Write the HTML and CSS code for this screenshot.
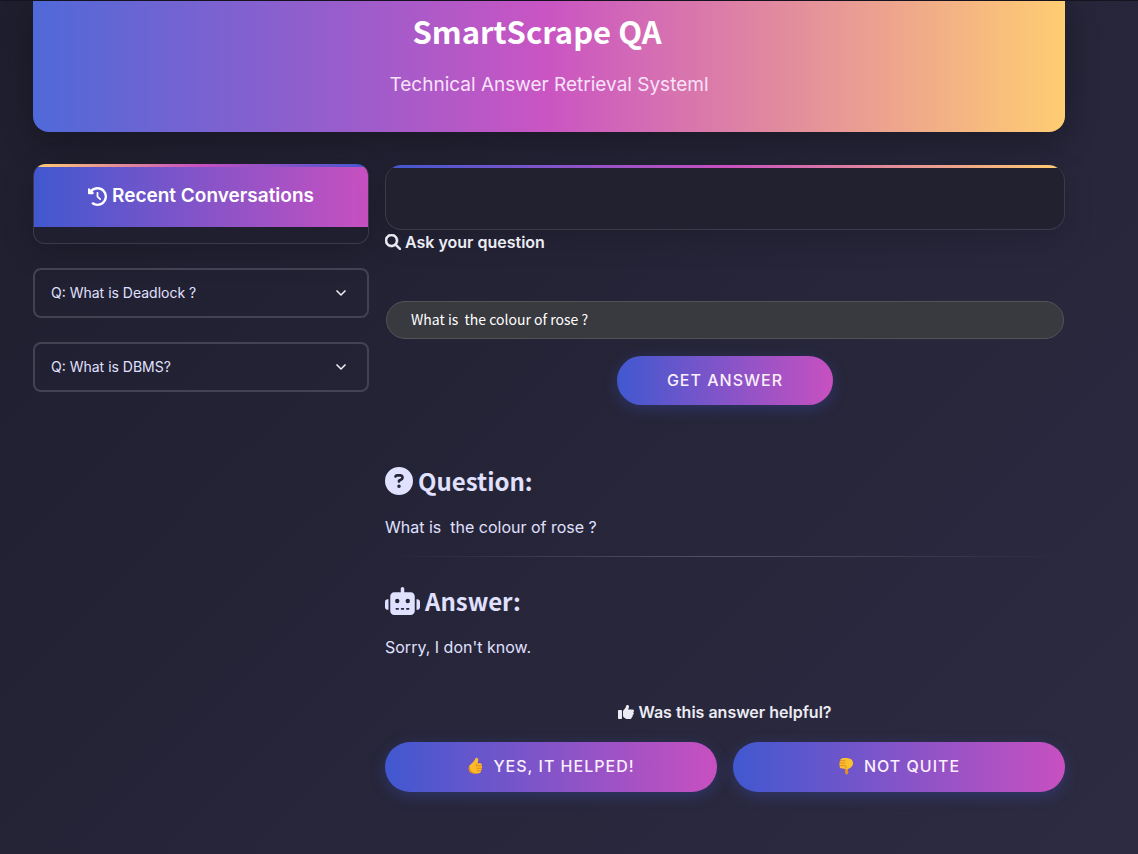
FILE: index.html
```html
<!DOCTYPE html>
<html lang="en">
<head>
<meta charset="utf-8">
<title>SmartScrape QA</title>
<link rel="stylesheet" href="styles.css">
</head>
<body>
<div class="page">
  <header class="banner">
    <h1 class="banner-title">SmartScrape QA</h1>
    <p class="banner-sub">Technical Answer Retrieval Systeml</p>
  </header>
  <div class="columns">
    <aside class="sidebar">
      <div class="recent">
        <h3 class="recent-title">
          <svg class="icon icon-md" viewBox="0 0 512 512" aria-hidden="true"><path d="M75 75L41 41C25.900 25.900 0 36.600 0 57.900V168c0 13.300 10.700 24 24 24H134.100c21.400 0 32.100-25.900 17-41l-30.800-30.800C155 85.500 203 64 256 64c106 0 192 86 192 192s-86 192-192 192c-40.800 0-78.600-12.700-109.700-34.400c-14.500-10.100-34.400-6.600-44.600 7.900s-6.600 34.400 7.900 44.600C151.200 495 201.700 512 256 512c141.400 0 256-114.600 256-256S397.400 0 256 0C185.300 0 121.300 28.700 75 75zm181 53c-13.300 0-24 10.700-24 24V256c0 6.400 2.500 12.500 7 17l72 72c9.400 9.400 24.600 9.400 33.900 0s9.400-24.600 0-33.900l-65-65V152c0-13.300-10.700-24-24-24z"/></svg>
          Recent Conversations
        </h3>
      </div>
      <button class="history" type="button" aria-expanded="false"><span>Q: What is Deadlock ?</span><svg class="chevron" viewBox="0 0 12 12" aria-hidden="true"><path d="M1.500 3.500l4.500 4.500 4.500-4.500"/></svg></button>
      <button class="history" type="button" aria-expanded="false"><span>Q: What is DBMS?</span><svg class="chevron" viewBox="0 0 12 12" aria-hidden="true"><path d="M1.500 3.500l4.500 4.500 4.500-4.500"/></svg></button>
    </aside>
    <main class="main">
      <div class="panel"></div>
      <label class="label" for="question">
        <svg class="icon icon-sm icon-search" viewBox="0 0 512 512" aria-hidden="true"><path d="M416 208c0 45.900-14.900 88.300-40 122.700L502.600 457.400c12.500 12.500 12.500 32.800 0 45.300s-32.800 12.500-45.300 0L330.700 376c-34.400 25.200-76.800 40-122.700 40C93.100 416 0 322.900 0 208S93.100 0 208 0S416 93.100 416 208zM208 352a144 144 0 1 0 0-288 144 144 0 1 0 0 288z"/></svg>
        Ask your question
      </label>
      <input class="field" id="question" type="text" value="What is  the colour of rose ?">
      <button class="pill pill-ask" type="button">GET ANSWER</button>
      <section class="block">
        <h2 class="heading">
          <svg class="icon icon-lg" viewBox="0 0 512 512" aria-hidden="true"><path d="M256 512A256 256 0 1 0 256 0a256 256 0 1 0 0 512zM169.800 165.300c7.900-22.300 29.100-37.300 52.800-37.300h58.300c34.900 0 63.100 28.300 63.100 63.100c0 22.600-12.100 43.500-31.700 54.800L280 264.400c-.2 13-10.900 23.600-24 23.600c-13.300 0-24-10.700-24-24V250.500c0-8.600 4.600-16.500 12.100-20.800l44.300-25.400c4.700-2.700 7.600-7.700 7.600-13.100c0-8.400-6.800-15.100-15.100-15.100H222.600c-3.400 0-6.400 2.100-7.500 5.300l-.4 1.200c-4.400 12.500-18.200 19-30.600 14.600s-19-18.200-14.600-30.600l.4-1.200zM224 352a32 32 0 1 1 64 0 32 32 0 1 1-64 0z"/></svg>
          Question:
        </h2>
        <p class="text">What is&nbsp; the colour of rose ?</p>
      </section>
      <hr class="rule">
      <section class="block-answer">
        <h2 class="heading">
          <svg class="icon icon-robot" viewBox="0 0 640 512" aria-hidden="true"><path fill-rule="evenodd" d="M320 0c17.700 0 32 14.300 32 32V96H472c39.800 0 72 32.200 72 72V440c0 39.800-32.200 72-72 72H168c-39.800 0-72-32.200-72-72V168c0-39.800 32.200-72 72-72H288V32c0-17.700 14.300-32 32-32zM208 384c-8.800 0-16 7.200-16 16s7.200 16 16 16h32c8.800 0 16-7.200 16-16s-7.200-16-16-16H208zm96 0c-8.800 0-16 7.200-16 16s7.200 16 16 16h32c8.800 0 16-7.200 16-16s-7.200-16-16-16H304zm96 0c-8.800 0-16 7.200-16 16s7.200 16 16 16h32c8.800 0 16-7.200 16-16s-7.200-16-16-16H400zM264 256a40 40 0 1 0-80 0 40 40 0 1 0 80 0zm152 40a40 40 0 1 0 0-80 40 40 0 1 0 0 80zM48 224H64V416H48c-26.500 0-48-21.500-48-48V272c0-26.500 21.500-48 48-48zm544 0c26.500 0 48 21.500 48 48v96c0 26.500-21.500 48-48 48H576V224h16z"/></svg>
          Answer:
        </h2>
        <p class="text">Sorry, I don't know.</p>
      </section>
      <p class="label label-center">
        <svg class="icon icon-sm" viewBox="0 0 512 512" aria-hidden="true"><path d="M313.400 32.900c26 5.200 42.900 30.500 37.700 56.500l-2.300 11.400c-5.300 26.700-15.100 52.100-28.800 75.200H464c26.500 0 48 21.500 48 48c0 18.500-10.500 34.600-25.900 42.600C497 275.400 504 288.900 504 304c0 23.400-16.800 42.900-38.900 47.100c4.400 7.300 6.900 15.800 6.900 24.900c0 21.300-13.900 39.400-33.100 45.600c.7 3.300 1.100 6.800 1.100 10.400c0 26.500-21.500 48-48 48H294.500c-19 0-37.500-5.600-53.300-16.100l-38.500-25.700C176 420.400 160 390.400 160 358.300V247.100c0-29.200 13.300-56.700 36-75l7.400-5.900c26.500-21.200 44.600-51 51.200-84.200l2.300-11.400c5.200-26 30.500-42.900 56.500-37.700zM32 192H96c17.700 0 32 14.300 32 32V448c0 17.700-14.300 32-32 32H32c-17.700 0-32-14.300-32-32V224c0-17.700 14.300-32 32-32z"/></svg>
        Was this answer helpful?
      </p>
      <div class="votes">
        <button class="pill" type="button">
          <svg class="thumb" viewBox="0 0 16 18" aria-hidden="true"><path fill="#fbb92c" d="M8.500.8c1.700-.7 2.500 1 2.200 2.700L10.200 6.300h2.600c1.500 0 2 1.600 1.200 2.500 1 .7.900 2-.1 2.500.7.800.4 2-.5 2.400.4 1-.2 2-1.500 2.200-2 .5-4.500.9-6.700.4C2.800 15.800 1.200 14.200 1.200 11.500c0-2.800 1.600-3.800 3.500-5.400C6.600 4.500 7.200 2.500 8.500.8z"/><path fill="#e78b18" d="M1.200 11.500c0 2.700 1.600 4.300 4 4.800 2.200.5 4.700.1 6.700-.4-2.600.1-5.800.2-7.500-1.200C3 13.600 2.300 12 2.600 9.200 1.600 9.900 1.200 10.500 1.200 11.500z"/><path fill="none" stroke="#d87a17" stroke-width=".7" stroke-linecap="round" d="M14 8.800H9.600M13.900 11.300H9.200M13.400 13.700H9.400M9.600 6.500c-1 .7-1.200 1.700-.7 2.500"/></svg>
          YES, IT HELPED!
        </button>
        <button class="pill" type="button">
          <svg class="thumb" viewBox="0 0 16 18" aria-hidden="true"><path fill="#fbc02f" d="M7.500 17.200c1.700.5 2.500-1 2.100-2.700l-.4-2.400c2.700-.8 5.300-2.700 5.300-5.900 0-2.700-1.400-4.200-4-4.800-2.400-.5-5-.5-7.200.1C2 1.900 1.700 2.700 2 3.700 1 4.200.8 5.300 1.400 6.100.5 6.800.6 8 1.500 8.600c-.8 1.100-.2 2.500 1.300 2.700l4 .6c.6 1.700-.2 3.500.7 5.300z"/><path fill="#e78b18" d="M7.500 17.200c1.700.5 2.500-1 2.100-2.700l-.4-2.400c-1.200.3-1.800-.2-2.400-.2.500 1.700-.2 3.500.7 5.300z"/><path fill="none" stroke="#d87a17" stroke-width=".7" stroke-linecap="round" d="M2 3.700h4.500M1.500 6.100h5M1.600 8.600h5M6.800 9c1.300.6 1.200 2-.1 2.500"/></svg>
          NOT QUITE
        </button>
      </div>
    </main>
  </div>
</div>
</body>
</html>
```
FILE: styles.css
```css
* { box-sizing: border-box; }

body {
  margin: 0;
  min-height: 100vh;
  font-family: Inter, "Liberation Sans", sans-serif;
  font-size: 16px;
  line-height: 24px;
  color: #e0e0ff;
  background: linear-gradient(135deg, #1e1e2e, #2d2b42);
  border-top: 1px solid #14131f;
}

h1, h2, h3, p { margin: 0; }

button, input { font: inherit; }

.page { padding: 0 73px 61px 33px; }

.banner {
  padding: 6px 24px 33px;
  text-align: center;
  background: linear-gradient(90deg, #5069d8, #ca55c3 50%, #ffcd72);
  border-radius: 0 0 16px 16px;
  box-shadow: 0 8px 32px rgba(0, 0, 0, 0.3);
}

.banner-title {
  padding-right: 24px;
  font-family: "Noto Sans CJK SC", sans-serif;
  font-size: 31px;
  font-weight: 700;
  line-height: 48px;
  color: #fff;
}

.banner-sub {
  padding-top: 16px;
  font-size: 19px;
  line-height: 28px;
  color: #f8e2fa;
}

.columns {
  display: grid;
  grid-template-columns: 42fr 85fr;
  gap: 16px;
  padding-top: 32px;
}

.recent {
  padding-bottom: 16px;
  margin-bottom: 24px;
  overflow: hidden;
  border: 1px solid #3c3a4a;
  border-top: 0;
  border-radius: 12px;
  background: linear-gradient(270deg, #4158d0, #c850c0 50%, #ffcc70) top / 100% 3px no-repeat, #201f2f;
  box-shadow: 0 8px 32px rgba(0, 0, 0, 0.2);
}

.recent-title {
  display: flex;
  justify-content: center;
  align-items: center;
  gap: 5px;
  margin: 3px -1px 0;
  padding: 15px 16px 17px;
  font-size: 19px;
  font-weight: 600;
  line-height: 28px;
  color: #fff;
  background: linear-gradient(90deg, #4158d0, #c850c0);
}

.icon { flex: none; fill: currentColor; }
.icon-sm { width: 16px; height: 16px; }
.icon-md { width: 19px; height: 19px; }
.icon-lg { width: 28px; height: 28px; }
.icon-robot { width: 35px; height: 28px; }
.icon-search { stroke: currentColor; stroke-width: 20; }

.history {
  display: flex;
  justify-content: space-between;
  align-items: center;
  width: 100%;
  margin-bottom: 24px;
  padding: 12px 20px 12px 16px;
  font-size: 14px;
  line-height: 22px;
  color: #e0e0ff;
  background: transparent;
  border: 2px solid #434253;
  border-radius: 8px;
}

.chevron {
  width: 12px;
  height: 12px;
  fill: none;
  stroke: #f2f2fa;
  stroke-width: 1.5;
}

.main {
  display: flex;
  flex-direction: column;
}

.panel {
  height: 65px;
  border: 1px solid #3c3a4a;
  border-top: 0;
  border-radius: 16px;
  margin-top: 1px;
  background: linear-gradient(90deg, #4158d0, #c850c0 50%, #ffcc70) top / 100% 3px no-repeat, #222130;
  box-shadow: 0 8px 32px rgba(0, 0, 0, 0.15);
}

.label {
  display: flex;
  align-items: center;
  gap: 4px;
  font-weight: 600;
  color: #ececf4;
}

.label-center { justify-content: center; margin-top: 41px; }

.field {
  height: 38px;
  margin: 47px 1px 17px;
  padding: 0 24px 2px;
  font-family: "Noto Sans CJK SC", sans-serif;
  font-size: 14px;
  color: #fff;
  background: #393940;
  border: 1px solid #535356;
  border-radius: 19px;
  outline: 0;
}

.pill {
  display: flex;
  justify-content: center;
  align-items: center;
  gap: 9px;
  padding: 12px 50px 14px;
  font-weight: 500;
  letter-spacing: 1px;
  color: #fbeffd;
  background: linear-gradient(90deg, #4158d0, #c850c0);
  border: 0;
  border-radius: 25px;
  box-shadow: 0 4px 15px rgba(65, 88, 208, 0.3);
}

.pill-ask { align-self: center; padding-bottom: 13px; }

.block { margin-top: 56px; }

.heading {
  display: flex;
  align-items: center;
  gap: 5px;
  font-family: "Noto Sans CJK SC", sans-serif;
  font-size: 24px;
  font-weight: 700;
  line-height: 40px;
}

.text { margin-top: 14px; }

.rule {
  width: 100%;
  height: 1px;
  margin: 17px 0 24px;
  border: 0;
  background: linear-gradient(90deg, transparent, #555363, transparent);
}

.votes {
  display: grid;
  grid-template-columns: 1fr 1fr;
  gap: 16px;
  margin-top: 18px;
}

.thumb { width: 17px; height: 18px; }
```
